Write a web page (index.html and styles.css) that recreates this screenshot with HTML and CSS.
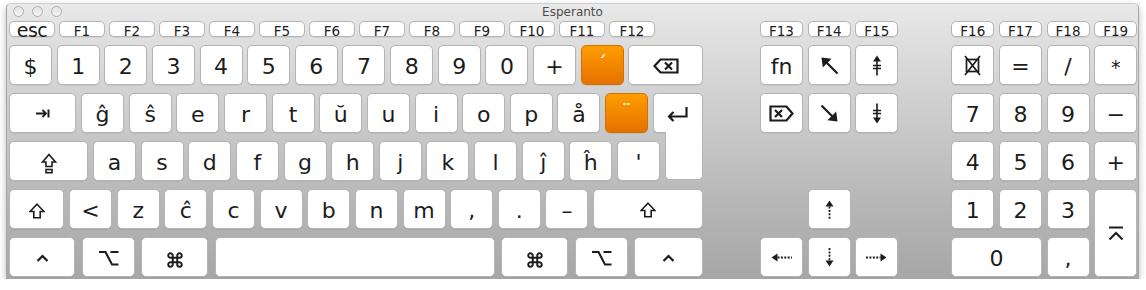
FILE: index.html
```html
<!DOCTYPE html>
<html lang="eo">
<head>
    <meta charset="UTF-8">
    <title>Esperanto</title>
    <link rel="stylesheet" href="styles.css">
</head>
<body>
<div class="window">
    <div class="titlebar">
        <div class="lights"><span></span><span></span><span></span></div>
        <div class="title">Esperanto</div>
        <div></div>
    </div>

    <div class="board">
        <!-- main keys -->
        <div class="main">
            <div class="row frow">
                <div class="fkey esc">esc</div>
                <div class="fkey">F1</div>
                <div class="fkey">F2</div>
                <div class="fkey">F3</div>
                <div class="fkey">F4</div>
                <div class="fkey">F5</div>
                <div class="fkey">F6</div>
                <div class="fkey">F7</div>
                <div class="fkey">F8</div>
                <div class="fkey">F9</div>
                <div class="fkey">F10</div>
                <div class="fkey">F11</div>
                <div class="fkey">F12</div>
            </div>
            <div class="row">
                <div class="key">$</div>
                <div class="key">1</div>
                <div class="key">2</div>
                <div class="key">3</div>
                <div class="key">4</div>
                <div class="key">5</div>
                <div class="key">6</div>
                <div class="key">7</div>
                <div class="key">8</div>
                <div class="key">9</div>
                <div class="key">0</div>
                <div class="key">+</div>
                <div class="key dead">´</div>
                <div class="key ico grow">
                    <svg width="26" height="16" viewBox="0 0 26 16"><path d="M1.5 8 L7.5 1.5 H24.5 V14.5 H7.5 Z M12 4.5 L19 11.5 M19 4.5 L12 11.5" fill="none" stroke="#1c1c1c" stroke-width="2.2" stroke-linejoin="miter"/></svg>
                </div>
            </div>
            <div class="row">
                <div class="key ico tab">
                    <svg width="14" height="9" viewBox="0 0 14 9"><path d="M0 4.5 H10 M6.5 1 L10 4.5 L6.5 8" fill="none" stroke="#1c1c1c" stroke-width="1.8"/><path d="M12.5 0.5 V8.5" stroke="#1c1c1c" stroke-width="2"/></svg>
                </div>
                <div class="key">ĝ</div>
                <div class="key">ŝ</div>
                <div class="key">e</div>
                <div class="key">r</div>
                <div class="key">t</div>
                <div class="key">ŭ</div>
                <div class="key">u</div>
                <div class="key">i</div>
                <div class="key">o</div>
                <div class="key">p</div>
                <div class="key">å</div>
                <div class="key dead">¨</div>
                <div class="key ico grow ret">
                    <svg width="23" height="16" viewBox="0 0 23 16"><path d="M20.5 1 V10.5 H3 M7.5 6 L3 10.5 L7.5 15" fill="none" stroke="#1c1c1c" stroke-width="2.2"/></svg>
                </div>
            </div>
            <div class="row">
                <div class="key ico caps">
                    <svg width="16" height="21" viewBox="0 0 16 21"><path d="M8 1.5 L14.5 9 H11 V13.5 H5 V9 H1.5 Z" fill="none" stroke="#1c1c1c" stroke-width="1.6" stroke-linejoin="miter"/><rect x="5" y="16.5" width="6" height="3.2" fill="none" stroke="#1c1c1c" stroke-width="1.6"/></svg>
                </div>
                <div class="key">a</div>
                <div class="key">s</div>
                <div class="key">d</div>
                <div class="key">f</div>
                <div class="key">g</div>
                <div class="key">h</div>
                <div class="key">j</div>
                <div class="key">k</div>
                <div class="key">l</div>
                <div class="key">ĵ</div>
                <div class="key">ĥ</div>
                <div class="key">'</div>
            </div>
            <div class="row">
                <div class="key ico lshift">
                    <svg width="16" height="16" viewBox="0 0 16 16"><path d="M8 1.2 L15 8.5 H11.2 V14.8 H4.8 V8.5 H1 Z" fill="none" stroke="#1c1c1c" stroke-width="1.6" stroke-linejoin="miter"/></svg>
                </div>
                <div class="key">&lt;</div>
                <div class="key">z</div>
                <div class="key">ĉ</div>
                <div class="key">c</div>
                <div class="key">v</div>
                <div class="key">b</div>
                <div class="key">n</div>
                <div class="key">m</div>
                <div class="key">,</div>
                <div class="key">.</div>
                <div class="key">–</div>
                <div class="key ico grow">
                    <svg width="16" height="16" viewBox="0 0 16 16"><path d="M8 1.2 L15 8.5 H11.2 V14.8 H4.8 V8.5 H1 Z" fill="none" stroke="#1c1c1c" stroke-width="1.6" stroke-linejoin="miter"/></svg>
                </div>
            </div>
            <div class="row bottom">
                <div class="key ico ctrl">
                    <svg width="13" height="8" viewBox="0 0 13 8"><path d="M1.5 7 L6.5 2 L11.5 7" fill="none" stroke="#1c1c1c" stroke-width="2.2"/></svg>
                </div>
                <div class="key ico opt">
                    <svg width="21" height="16" viewBox="0 0 21 16"><path d="M1 2 H7.5 L14 14.5 H20.5 M12.5 2 H20.5" fill="none" stroke="#1c1c1c" stroke-width="2.1"/></svg>
                </div>
                <div class="key ico cmd">
                    <svg width="18" height="18" viewBox="0 0 24 24"><path d="M18 3a3 3 0 0 0-3 3v12a3 3 0 0 0 3 3 3 3 0 0 0 3-3 3 3 0 0 0-3-3H6a3 3 0 0 0-3 3 3 3 0 0 0 3 3 3 3 0 0 0 3-3V6a3 3 0 0 0-3-3 3 3 0 0 0-3 3 3 3 0 0 0 3 3h12a3 3 0 0 0 3-3 3 3 0 0 0-3-3z" fill="none" stroke="#1c1c1c" stroke-width="2.6"/></svg>
                </div>
                <div class="key space"></div>
                <div class="key ico cmd">
                    <svg width="18" height="18" viewBox="0 0 24 24"><path d="M18 3a3 3 0 0 0-3 3v12a3 3 0 0 0 3 3 3 3 0 0 0 3-3 3 3 0 0 0-3-3H6a3 3 0 0 0-3 3 3 3 0 0 0 3 3 3 3 0 0 0 3-3V6a3 3 0 0 0-3-3 3 3 0 0 0-3 3 3 3 0 0 0 3 3h12a3 3 0 0 0 3-3 3 3 0 0 0-3-3z" fill="none" stroke="#1c1c1c" stroke-width="2.6"/></svg>
                </div>
                <div class="key ico opt">
                    <svg width="21" height="16" viewBox="0 0 21 16"><path d="M1 2 H7.5 L14 14.5 H20.5 M12.5 2 H20.5" fill="none" stroke="#1c1c1c" stroke-width="2.1"/></svg>
                </div>
                <div class="key ico grow">
                    <svg width="13" height="8" viewBox="0 0 13 8"><path d="M1.5 7 L6.5 2 L11.5 7" fill="none" stroke="#1c1c1c" stroke-width="2.2"/></svg>
                </div>
            </div>
        </div>

        <!-- navigation keys -->
        <div class="nav">
            <div class="fkey">F13</div>
            <div class="fkey">F14</div>
            <div class="fkey">F15</div>

            <div class="key">fn</div>
            <div class="key ico">
                <svg width="19" height="19" viewBox="0 0 19 19"><path d="M17.5 17.5 L5 5" stroke="#1c1c1c" stroke-width="2.2"/><path d="M1.5 1.5 L11.5 2.8 L2.8 11.5 Z" fill="#1c1c1c"/></svg>
            </div>
            <div class="key ico">
                <svg width="10" height="21" viewBox="0 0 10 21"><path d="M5 0.5 L9 6.5 H1 Z" fill="#1c1c1c"/><path d="M5 6 V20.5 M1 10.5 H9 M1 13.5 H9" stroke="#1c1c1c" stroke-width="1.6"/></svg>
            </div>

            <div class="key ico">
                <svg width="25" height="17" viewBox="0 0 25 17"><path d="M1.5 1.5 H17.5 L23.5 8.5 L17.5 15.5 H1.5 Z M6 5 L13 12 M13 5 L6 12" fill="none" stroke="#1c1c1c" stroke-width="2.2"/></svg>
            </div>
            <div class="key ico">
                <svg width="19" height="19" viewBox="0 0 19 19"><path d="M1.5 1.5 L14 14" stroke="#1c1c1c" stroke-width="2.2"/><path d="M17.5 17.5 L7.5 16.2 L16.2 7.5 Z" fill="#1c1c1c"/></svg>
            </div>
            <div class="key ico">
                <svg width="10" height="21" viewBox="0 0 10 21"><path d="M5 20.5 L9 14.5 H1 Z" fill="#1c1c1c"/><path d="M5 0.5 V15 M1 7.5 H9 M1 10.5 H9" stroke="#1c1c1c" stroke-width="1.6"/></svg>
            </div>

            <div class="key ico arrow-up">
                <svg width="9" height="19" viewBox="0 0 9 19"><path d="M4.5 0.5 L8.5 6.5 H0.5 Z" fill="#1c1c1c"/><path d="M4.5 6.5 V19" stroke="#1c1c1c" stroke-width="1.8" stroke-dasharray="2 1.4"/></svg>
            </div>

            <div class="key ico arrow-left">
                <svg width="21" height="9" viewBox="0 0 21 9"><path d="M0.5 4.5 L6.5 0.5 V8.5 Z" fill="#1c1c1c"/><path d="M6.5 4.5 H21" stroke="#1c1c1c" stroke-width="1.8" stroke-dasharray="2 1.4"/></svg>
            </div>
            <div class="key ico arrow-down">
                <svg width="9" height="19" viewBox="0 0 9 19"><path d="M4.5 18.5 L8.5 12.5 H0.5 Z" fill="#1c1c1c"/><path d="M4.5 0 V12.5" stroke="#1c1c1c" stroke-width="1.8" stroke-dasharray="2 1.4"/></svg>
            </div>
            <div class="key ico arrow-right">
                <svg width="21" height="9" viewBox="0 0 21 9"><path d="M20.5 4.5 L14.5 0.5 V8.5 Z" fill="#1c1c1c"/><path d="M0 4.5 H14.5" stroke="#1c1c1c" stroke-width="1.8" stroke-dasharray="2 1.4"/></svg>
            </div>
        </div>

        <!-- numeric keypad -->
        <div class="pad">
            <div class="fkey">F16</div>
            <div class="fkey">F17</div>
            <div class="fkey">F18</div>
            <div class="fkey">F19</div>

            <div class="key ico">
                <svg width="17" height="21" viewBox="0 0 17 21"><rect x="2.5" y="4.5" width="12" height="12" fill="none" stroke="#1c1c1c" stroke-width="1.7"/><path d="M1 1 L16 20 M16 1 L1 20" stroke="#1c1c1c" stroke-width="1.7"/></svg>
            </div>
            <div class="key">=</div>
            <div class="key">/</div>
            <div class="key small">*</div>

            <div class="key">7</div>
            <div class="key">8</div>
            <div class="key">9</div>
            <div class="key">−</div>

            <div class="key">4</div>
            <div class="key">5</div>
            <div class="key">6</div>
            <div class="key">+</div>

            <div class="key">1</div>
            <div class="key">2</div>
            <div class="key">3</div>
            <div class="key ico enter">
                <svg width="16" height="15" viewBox="0 0 16 15"><path d="M1 1.5 H15 M1.5 13.5 L8 7 L14.5 13.5" fill="none" stroke="#1c1c1c" stroke-width="2"/></svg>
            </div>

            <div class="key zero">0</div>
            <div class="key">,</div>
        </div>
    </div>
</div>
</body>
</html>
```

FILE: styles.css
```css
body {
    margin: 0;
    background: #fff;
    font-family: "DejaVu Sans", "Liberation Sans", sans-serif;
}
.window {
    margin: 3px 0 0 6px;
    width: 1133px;
    height: 276px;
    box-sizing: border-box;
    border: 1px solid #a6a6a6;
    border-top-color: #cfcfcf;
    border-radius: 5px 5px 0 0;
    background: linear-gradient(to bottom, #e9e9e9 0%, #dedede 14%, #c9c9c9 45%, #b5b5b5 75%, #a7a7a7 100%);
    box-shadow: 0 3px 7px rgba(0, 0, 0, 0.28);
}
.titlebar {
    display: grid;
    grid-template-columns: 1fr auto 1fr;
    height: 17px;
}
.lights {
    display: flex;
    gap: 8px;
    padding: 2px 0 0 6px;
}
.lights span {
    width: 9px;
    height: 9px;
    border-radius: 50%;
    border: 1px solid #b0b0b0;
    background: linear-gradient(#e4e4e4, #f2f2f2);
}
.title {
    font-size: 12px;
    line-height: 17px;
    color: #4d4d4d;
}

.board {
    display: flex;
    padding-left: 2px;
}
.main {
    width: 694px;
    display: flex;
    flex-direction: column;
    gap: 8px;
}
.row {
    display: flex;
    gap: 4.65px;
    height: 40px;
}
.row.frow {
    height: 16px;
    gap: 4px;
}
.row.bottom {
    gap: 6.5px;
}

.nav,
.pad {
    display: grid;
    grid-template-rows: 16px repeat(5, 40px);
    row-gap: 8px;
    column-gap: 4.65px;
}
.nav {
    margin-left: 57px;
    grid-template-columns: repeat(3, 43px);
}
.pad {
    margin-left: 53px;
    grid-template-columns: repeat(4, 43px);
}
.nav .arrow-up {
    grid-row: 5;
    grid-column: 2;
}
.nav .arrow-left {
    grid-row: 6;
    grid-column: 1;
}
.nav .arrow-down {
    grid-row: 6;
    grid-column: 2;
}
.nav .arrow-right {
    grid-row: 6;
    grid-column: 3;
}
.pad .enter {
    grid-column: 4;
    grid-row: 5 / span 2;
}
.pad .zero {
    grid-column: 1 / span 2;
}

.key,
.fkey {
    box-sizing: border-box;
    background: #fff;
    border: 1px solid #b4b4b4;
    border-radius: 5px;
    display: flex;
    align-items: center;
    justify-content: center;
    color: #1c1c1c;
    box-shadow: 0 1px 0 rgba(0, 0, 0, 0.06);
}
.key {
    width: 43px;
    height: 40px;
    font-size: 22px;
    padding-top: 3px;
}
.key.ico {
    padding-top: 1px;
}
.fkey {
    width: 46px;
    height: 16px;
    font-size: 13.5px;
    padding-top: 3px;
}
.nav .fkey,
.pad .fkey {
    width: 43px;
}
.fkey.esc {
    font-size: 19px;
    letter-spacing: -0.5px;
    padding-top: 1px;
}

.key.grow {
    width: auto;
    flex: 1;
}
.key.tab {
    width: 67.4px;
}
.key.caps {
    width: 79.3px;
    padding-top: 4px;
}
.key.lshift {
    width: 55.4px;
    padding-top: 3px;
}
.key.ctrl {
    width: 66px;
}
.key.opt {
    width: 53px;
}
.key.cmd {
    width: 67px;
    padding-top: 5px;
}
.key.space {
    width: 280px;
}
.pad .key.zero,
.pad .key.enter {
    width: auto;
    height: auto;
}
.key.small {
    font-size: 19px;
}

.key.dead {
    background: linear-gradient(#ff9d00, #e67100);
    border-color: #d27000;
    color: #fff;
    font-size: 20px;
    align-items: flex-start;
    padding-top: 7px;
    line-height: 1;
}

/* return key: L shape, lower part hangs into the next row */
.key.ret {
    position: relative;
    border-bottom-right-radius: 0;
}
.key.ret::after {
    content: '';
    position: absolute;
    left: 11px;
    right: -1px;
    top: 100%;
    height: 47px;
    background: #fff;
    border: 1px solid #b4b4b4;
    border-top: none;
    border-radius: 0 0 5px 5px;
}
```
